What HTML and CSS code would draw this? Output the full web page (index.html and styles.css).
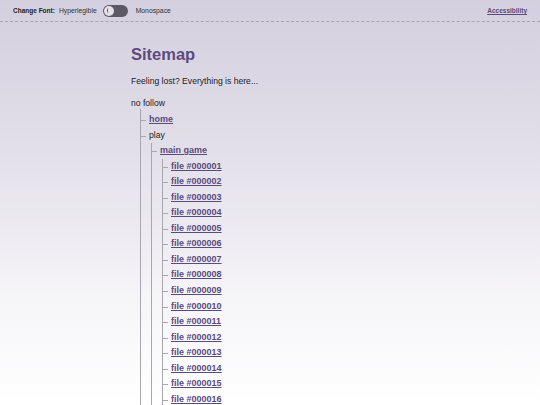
FILE: index.html
```
<!DOCTYPE html>
<html lang="en">
<head>
<meta charset="utf-8">
<title>Sitemap</title>
<link rel="stylesheet" href="styles.css">
</head>
<body>
<header class="topbar">
  <div class="font-switch">
    <span class="label">Change Font:</span>
    <span class="opt">Hyperlegible</span>
    <span class="toggle"><span class="knob"><span class="glyph"></span></span></span>
    <span class="opt">Monospace</span>
  </div>
  <a class="a11y" href="#">Accessibility</a>
</header>
<main class="page">
  <h1 class="title">Sitemap</h1>
  <p class="intro">Feeling lost? Everything is here...</p>
  <div class="root">no follow</div>
  <ul class="tree level1">
    <li><a href="#">home</a></li>
    <li><span>play</span>
      <ul class="tree">
        <li><a href="#">main game</a>
          <ul class="tree">
            <li><a href="#">file #000001</a></li>
            <li><a href="#">file #000002</a></li>
            <li><a href="#">file #000003</a></li>
            <li><a href="#">file #000004</a></li>
            <li><a href="#">file #000005</a></li>
            <li><a href="#">file #000006</a></li>
            <li><a href="#">file #000007</a></li>
            <li><a href="#">file #000008</a></li>
            <li><a href="#">file #000009</a></li>
            <li><a href="#">file #000010</a></li>
            <li><a href="#">file #000011</a></li>
            <li><a href="#">file #000012</a></li>
            <li><a href="#">file #000013</a></li>
            <li><a href="#">file #000014</a></li>
            <li><a href="#">file #000015</a></li>
            <li><a href="#">file #000016</a></li>
          </ul>
        </li>
      </ul>
    </li>
  </ul>
</main>
</body>
</html>
```
FILE: styles.css
```
html, body {
  margin: 0;
  padding: 0;
}
body {
  font-family: "Liberation Sans", Arial, sans-serif;
  color: #222026;
  background: linear-gradient(to bottom, #d3cfde 0px, #e2dfe9 150px, #f6f5f8 300px, #ffffff 405px);
  min-height: 405px;
  height: 405px;
  overflow: hidden;
}
.topbar {
  height: 21px;
  display: flex;
  align-items: center;
  justify-content: space-between;
  padding: 0 13px;
  border-bottom: 1px dashed #a9a4b3;
  font-size: 6.8px;
}
.font-switch {
  display: flex;
  align-items: center;
}
.label {
  font-weight: bold;
  font-size: 6.5px;
  color: #222;
  margin-right: 4px;
}
.opt {
  color: #333;
}
.toggle {
  width: 25px;
  height: 12px;
  border-radius: 6px;
  background: #5d5964;
  display: flex;
  align-items: center;
  padding-left: 1px;
  box-sizing: border-box;
  margin: 0 8px 0 6px;
}
.knob {
  width: 10px;
  height: 10px;
  border-radius: 50%;
  background: #e4e1ea;
  display: flex;
  align-items: center;
  justify-content: center;
}
.glyph {
  width: 3px;
  height: 5px;
  border-left: 1px solid #5d5964;
  border-radius: 50% 0 0 50%;
  box-sizing: border-box;
}
.a11y {
  color: #5b4a7d;
  font-weight: bold;
  font-size: 6.5px;
  text-decoration: underline;
}
.page {
  width: 278px;
  margin: 0 auto;
  padding-top: 22px;
  font-size: 8.6px;
}
.title {
  margin: 0;
  font-size: 16.5px;
  font-weight: bold;
  color: #5e4a80;
  line-height: 20px;
}
.intro {
  margin: 12px 0 0;
  line-height: 11px;
}
.root {
  margin-top: 11px;
  line-height: 11px;
}
.tree {
  list-style: none;
  margin: 0 0 0 2px;
  padding: 0;
  border-left: 1px solid #aaa6b0;
}
.level1 {
  margin-left: 9px;
  padding-top: 3px;
}
.tree li {
  position: relative;
  padding-left: 8px;
  line-height: 15.55px;
}
.tree li::before {
  content: "";
  position: absolute;
  left: 0;
  top: 8px;
  width: 5px;
  border-top: 1px solid #aaa6b0;
}
.tree a {
  color: #5b4a7d;
  font-weight: bold;
  font-size: 9px;
  text-decoration: underline;
}
.tree span {
  color: #222;
}
```
